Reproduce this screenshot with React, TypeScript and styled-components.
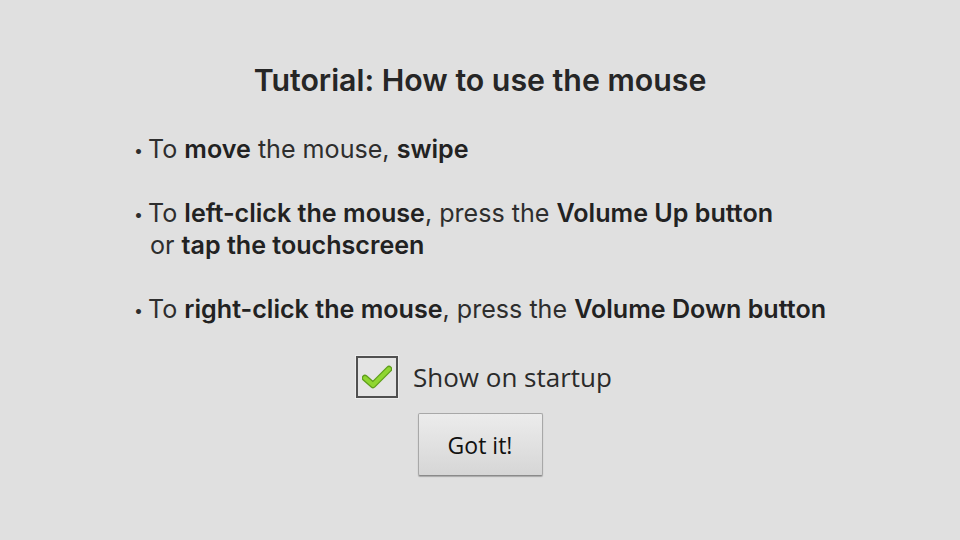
import React from "react";
import styled, { createGlobalStyle } from "styled-components";

const Global = createGlobalStyle`
  html, body { margin: 0; padding: 0; background: #e0e0e0; }
  body { width: 960px; height: 540px; overflow: hidden; }
`;

const Page = styled.div`
  width: 960px;
  height: 540px;
  box-sizing: border-box;
  padding-top: 60px;
  display: flex;
  flex-direction: column;
  align-items: center;
  background: #e0e0e0;
  color: #2e2e2e;
  font-family: Inter, Lato, "Liberation Sans", sans-serif;
`;

const Title = styled.h1`
  margin: 0;
  font-size: 30.3px;
  line-height: 40px;
  font-weight: 600;
  color: #262626;
`;

const List = styled.ul`
  margin: 33px 0 0 0;
  padding: 0;
  list-style: none;
  display: flex;
  flex-direction: column;
  gap: 32px;
  font-size: 25.1px;
  line-height: 32px;
  align-self: center;
`;

const Item = styled.li`
  display: flex;
  align-items: flex-start;
`;

const Bullet = styled.span`
  width: 14px;
  flex: none;
  font-size: 16px;
  line-height: 32px;
  padding-top: 1px;
  box-sizing: border-box;
  height: 32px;
  text-align: left;
`;

const ItemText = styled.span`
  display: block;
`;

const Cont = styled.span`
  display: block;
  padding-left: 2px;
`;

const B = styled.b`
  font-weight: 600;
  color: #222;
`;

const CheckRow = styled.label`
  margin-top: 31px;
  display: flex;
  align-items: center;
  gap: 15px;
  font-family: "Open Sans", "Noto Sans", sans-serif;
  font-size: 26px;
  color: #2a2a2a;
  margin-left: 8px;
`;

const Box = styled.span`
  width: 38px;
  height: 38px;
  border: 2px solid #505050;
  background: #e4e4e4;
  box-shadow: 0 0 0 1px #ececec;
  display: flex;
  align-items: center;
  justify-content: center;
`;

const Button = styled.button`
  margin-top: 15px;
  width: 125px;
  height: 63px;
  border: 1px solid #a8a8a8;
  border-bottom-color: #8a8a8a;
  border-radius: 2px;
  background: linear-gradient(#ececec, #d6d6d6);
  box-shadow: 0 1px 1px rgba(0,0,0,0.25);
  font-family: "Open Sans", "Noto Sans", sans-serif;
  font-size: 23px;
  color: #111;
  padding: 0;
`;

export default function App() {
  return (
    <>
      <Global />
      <Page>
        <Title>Tutorial: How to use the mouse</Title>
        <List>
          <Item>
            <Bullet>•</Bullet>
            <ItemText>
              To <B>move</B> the mouse, <B>swipe</B>
            </ItemText>
          </Item>
          <Item>
            <Bullet>•</Bullet>
            <ItemText>
              To <B>left-click the mouse</B>, press the <B>Volume Up button</B>
              <Cont>
                or <B>tap the touchscreen</B>
              </Cont>
            </ItemText>
          </Item>
          <Item>
            <Bullet>•</Bullet>
            <ItemText>
              To <B>right-click the mouse</B>, press the <B>Volume Down button</B>
            </ItemText>
          </Item>
        </List>
        <CheckRow>
          <Box>
            <svg width="30" height="26" viewBox="0 0 30 26">
              <path
                d="M3 14 L11 21 L27 5"
                fill="none"
                stroke="#5e9e1a"
                strokeWidth="6.5"
                strokeLinecap="round"
                strokeLinejoin="round"
              />
              <path
                d="M3 14 L11 21 L27 5"
                fill="none"
                stroke="#8fd631"
                strokeWidth="4"
                strokeLinecap="round"
                strokeLinejoin="round"
              />
            </svg>
          </Box>
          Show on startup
        </CheckRow>
        <Button>Got it!</Button>
      </Page>
    </>
  );
}
